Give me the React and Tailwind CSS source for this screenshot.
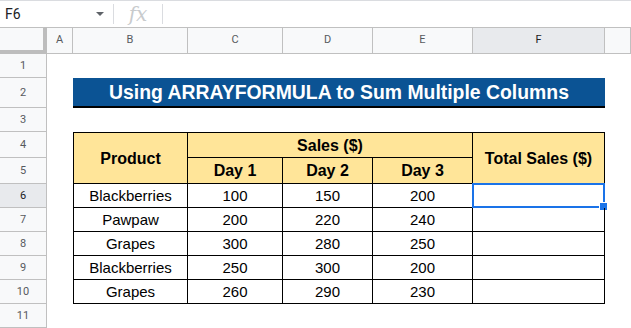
import React from "react";

const COLS = [
  { c: "A", cls: "col-start-2" },
  { c: "B", cls: "col-start-3" },
  { c: "C", cls: "col-start-4" },
  { c: "D", cls: "col-start-5" },
  { c: "E", cls: "col-start-6" },
  { c: "F", cls: "col-start-7" },
  { c: "", cls: "col-start-8" },
];

const ROWS = [
  "row-start-2",
  "row-start-3",
  "row-start-4",
  "row-start-5",
  "row-start-6",
  "row-start-7",
  "row-start-8",
  "row-start-9",
  "row-start-10",
  "row-start-11",
  "row-start-12",
];

const VALUE_COLS = ["col-start-4", "col-start-5", "col-start-6"];

const data = [
  ["Blackberries", 100, 150, 200],
  ["Pawpaw", 200, 220, 240],
  ["Grapes", 300, 280, 250],
  ["Blackberries", 250, 300, 200],
  ["Grapes", 260, 290, 230],
];

const arial = "font-['Liberation_Sans',Arial,sans-serif]";
const head = `${arial} bg-[#ffe599] border-black flex items-center justify-center pt-px font-bold text-[16px] text-black`;
const body = `${arial} border-black flex items-center justify-center pt-px text-[15px] text-black`;

export default function App() {
  return (
    <div className="w-[631px] h-[328px] overflow-hidden bg-white font-['Roboto','Liberation_Sans',sans-serif]">
      {/* formula bar */}
      <div className="h-[27px] border-t border-[#dadce0] flex items-center">
        <div className="w-[113px] flex items-center pl-[5px] pr-[9px] justify-between">
          <span className="text-[14px] text-[#202124] leading-none">F6</span>
          <span className="w-0 h-0 border-l-[4px] border-r-[4px] border-t-[4px] border-l-transparent border-r-transparent border-t-[#5f6368]" />
        </div>
        <div className="w-px h-[20px] bg-[#dadce0]" />
        <div className="w-[48px] flex items-center justify-center">
          <span className="text-[20px] text-[#c8cbcd] italic leading-none font-['DejaVu_Serif','Liberation_Serif',serif]">
            fx
          </span>
        </div>
        <div className="w-px h-[20px] bg-[#dadce0]" />
      </div>

      {/* sheet grid */}
      <div className="grid grid-cols-[47px_26px_115px_95px_90px_100px_132px_26px] grid-rows-[27px_24px_30px_24px_26px_26px_24px_24px_24px_24px_24px_24px]">
        {/* corner */}
        <div className="col-start-1 row-start-1 bg-[#f8f9fa] border-t border-t-[#c0c0c0] border-r-[4px] border-b-[4px] border-r-[#bdbdbd] border-b-[#bdbdbd]" />

        {/* column headers */}
        {COLS.map(({ c, cls }) => (
          <div
            key={cls}
            className={`${cls} row-start-1 border-t border-b border-r border-[#c0c0c0] flex items-center justify-center text-[11px] ${
              c === "F" ? "bg-[#e8eaed] text-[#202124]" : "bg-[#f8f9fa] text-[#575a5e]"
            }`}
          >
            {c}
          </div>
        ))}

        {/* row headers */}
        {ROWS.map((cls, i) => (
          <div
            key={cls}
            className={`${cls} col-start-1 border-r border-b border-[#c0c0c0] flex items-center justify-center pt-px text-[11px] ${
              i === 5 ? "bg-[#e8eaed] text-[#202124]" : "bg-[#f8f9fa] text-[#575a5e]"
            }`}
          >
            {i + 1}
          </div>
        ))}

        {/* title B2:F2 */}
        <div
          className={`${arial} col-start-3 col-end-8 row-start-3 bg-[#0b5394] border-b-2 border-black flex items-center justify-center pt-px text-white font-bold text-[19.4px]`}
        >
          Using ARRAYFORMULA to Sum Multiple Columns
        </div>

        {/* table header */}
        <div className={`${head} col-start-3 row-start-5 row-span-2 border`}>Product</div>
        <div className={`${head} col-start-4 col-end-7 row-start-5 border-t border-r border-b`}>Sales ($)</div>
        <div className={`${head} col-start-4 row-start-6 border-r border-b`}>Day 1</div>
        <div className={`${head} col-start-5 row-start-6 border-r border-b`}>Day 2</div>
        <div className={`${head} col-start-6 row-start-6 border-r border-b`}>Day 3</div>
        <div className={`${head} col-start-7 row-start-5 row-span-2 border-t border-r border-b`}>Total Sales ($)</div>

        {/* table body */}
        {data.map((row, r) => {
          const rowCls = ROWS[r + 5];
          return (
            <React.Fragment key={r}>
              <div className={`${body} ${rowCls} col-start-3 border-l border-r border-b`}>{row[0]}</div>
              {row.slice(1).map((v, j) => (
                <div key={j} className={`${body} ${rowCls} ${VALUE_COLS[j]} border-r border-b`}>
                  {v}
                </div>
              ))}
              <div className={`${rowCls} col-start-7 border-r border-b border-black relative`}>
                {r === 0 && (
                  <>
                    <div className="absolute -left-px -top-px -right-px -bottom-px border-2 border-[#1a73e8]" />
                    <div className="absolute -right-[4px] -bottom-[4px] w-[7px] h-[7px] bg-[#1a73e8] border border-white box-content" />
                  </>
                )}
              </div>
            </React.Fragment>
          );
        })}
      </div>
    </div>
  );
}
